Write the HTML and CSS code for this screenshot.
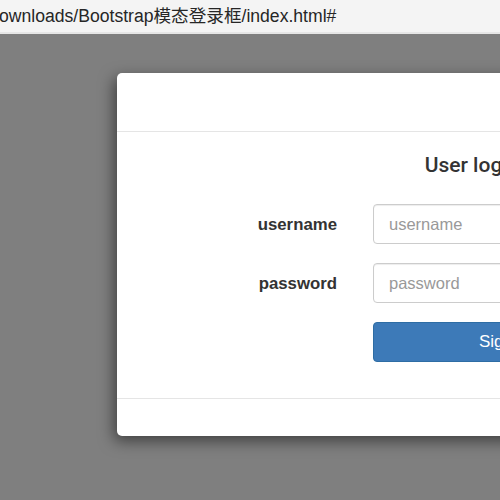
FILE: index.html
```html
<!DOCTYPE html>
<html lang="zh-CN">
<head>
  <meta charset="UTF-8">
  <meta name="viewport" content="width=device-width, initial-scale=1.0">
  <title>Bootstrap模态登录框</title>
  <link rel="stylesheet" href="styles.css">
</head>
<body>
  <div class="address-bar">
    <span class="address-text">ownloads/Bootstrap模态登录框/index.html#</span>
  </div>

  <div class="backdrop">
    <div class="modal">
      <div class="modal-header"></div>
      <div class="modal-body">
        <h4 class="modal-title">User login</h4>
        <form class="login-form" onsubmit="return false">
          <label for="username">username</label>
          <input type="text" id="username" placeholder="username">

          <label for="password">password</label>
          <input type="password" id="password" placeholder="password">

          <span></span>
          <button type="submit" class="btn-primary">Sign in</button>
        </form>
      </div>
      <div class="modal-footer"></div>
    </div>
  </div>
</body>
</html>
```

FILE: styles.css
```css
/* page frame */
html, body {
  margin: 0;
  padding: 0;
  height: 100%;
  overflow: hidden;
}

body {
  font-family: "Liberation Sans", Arial, "Noto Sans CJK SC", sans-serif;
  color: #333;
  background-color: #7f7f7f;
}

/* location bar */
.address-bar {
  height: 32px;
  background-color: #f4f4f4;
  border-bottom: 2px solid #e6e6e6;
  display: flex;
  align-items: center;
  white-space: nowrap;
  overflow: hidden;
}

.address-text {
  font-size: 17.6px;
  color: #262626;
  margin-left: -1px;
  padding-bottom: 3px;
}

/* dimmed area behind the dialog */
.backdrop {
  padding: 39px 0 0 117px;
}

.modal {
  width: 710px;
  background-color: #fff;
  border-radius: 5px;
  box-shadow: -3px 5px 15px rgba(0, 0, 0, 0.5);
}

.modal-header {
  height: 58px;
  border-bottom: 1px solid #e5e5e5;
}

.modal-body {
  height: 266px;
  padding-top: 20px;
  box-sizing: border-box;
}

.modal-title {
  margin: 0 0 26px;
  text-align: center;
  font-family: Roboto, "Liberation Sans", sans-serif;
  font-size: 21px;
  font-weight: 500;
  line-height: 26px;
  color: #333;
}

.modal-footer {
  height: 37px;
  border-top: 1px solid #e5e5e5;
}

/* login form */
.login-form {
  display: grid;
  grid-template-columns: 220px 264px;
  column-gap: 36px;
  row-gap: 19px;
  align-items: center;
}

.login-form label {
  text-align: right;
  font-size: 16.8px;
  font-weight: bold;
  color: #333;
  padding-top: 2px;
}

.login-form input {
  height: 40px;
  box-sizing: border-box;
  padding: 6px 15px;
  font-family: inherit;
  font-size: 16.5px;
  color: #555;
  border: 1px solid #ccc;
  border-radius: 4px;
  box-shadow: inset 0 1px 1px rgba(0, 0, 0, 0.075);
  outline: none;
}

.login-form input::placeholder {
  color: #999;
}

.btn-primary {
  height: 40px;
  font-family: inherit;
  font-size: 17px;
  color: #fff;
  background-color: #3d7ab8;
  border: 1px solid #2e6da4;
  border-radius: 4px;
  cursor: pointer;
}
```
